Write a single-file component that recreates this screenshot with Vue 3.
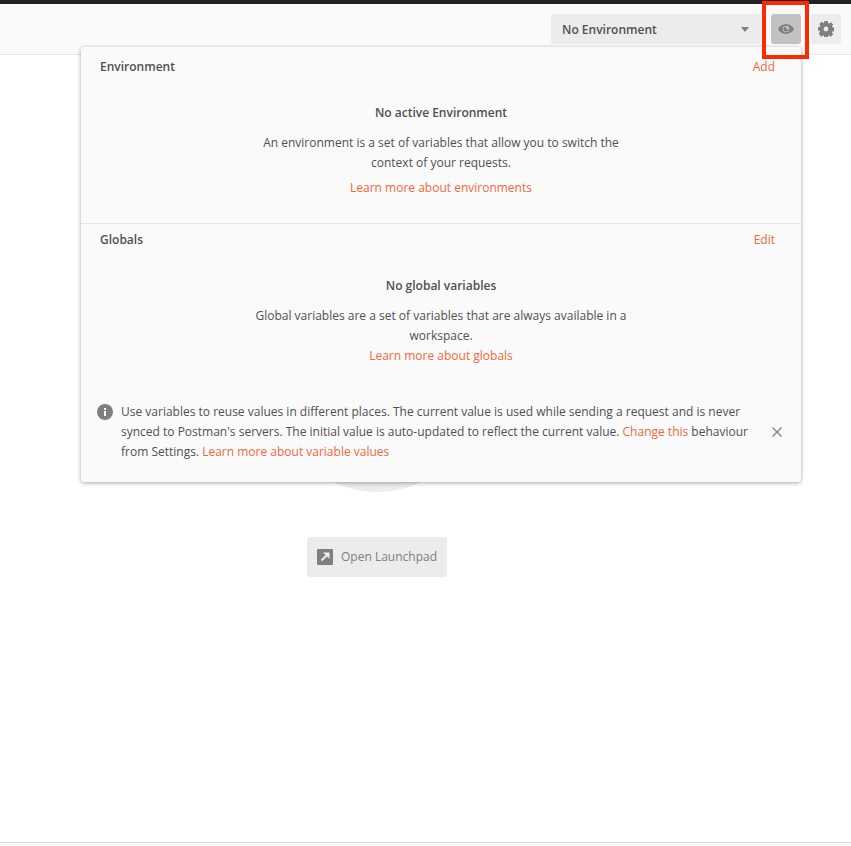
<template>
  <div class="app">
    <div class="topbar"></div>

    <header class="toolbar">
      <div class="env-select">
        <span class="env-name">No Environment</span>
        <span class="caret"></span>
      </div>
      <button class="tool-btn active" aria-label="Environment quick look">
        <svg width="16" height="10" viewBox="0 0 16 10">
          <path fill="#7f7f7f" fill-rule="evenodd" d="M8 0C4.400 0 1.400 2.200 0 5c1.400 2.800 4.400 5 8 5s6.600-2.200 8-5c-1.400-2.800-4.400-5-8-5zm0 1.700a3.300 3.300 0 1 1 0 6.600 3.300 3.300 0 0 1 0-6.600z" />
          <path fill="#7f7f7f" d="M8 2.500A2.500 2.500 0 1 0 10.500 5H8z" />
        </svg>
      </button>
      <button class="tool-btn" aria-label="Settings">
        <svg width="16" height="16" viewBox="0 0 18 18">
          <path fill="#7f7f7f" fill-rule="evenodd" d="M7 0h4l.4 2.300 1.100.5 2-1.400 2.600 2.600-1.400 2 .5 1.100 2.300.4v4l-2.300.4-.5 1.100 1.400 2-2.600 2.600-2-1.400-1.100.5-.4 2.300H7l-.4-2.300-1.100-.5-2 1.400L.9 14.100l1.400-2-.5-1.100L0 11V7l2.300-.4.500-1.100-1.400-2L4 .9l2 1.400 1.100-.5zM9 6.300a2.700 2.700 0 1 0 0 5.400 2.700 2.700 0 0 0 0-5.400z" />
        </svg>
      </button>
    </header>

    <main class="content">
      <div class="circle"></div>
      <button class="launchpad">
        <svg width="16" height="16" viewBox="0 0 16 16">
          <rect width="16" height="16" rx="1" fill="#7f7f7f" />
          <path fill="none" stroke="#ececec" stroke-width="2" d="M4.500 11.500l6-6" />
          <path fill="#ececec" d="M6 3.500h6.500V10z" />
        </svg>
        Open Launchpad
      </button>
    </main>

    <footer class="footer"></footer>

    <section class="popup">
      <div class="block env-block">
        <div class="block-head">
          <span class="block-title">Environment</span>
          <a class="link">Add</a>
        </div>
        <div class="empty">
          <h4>No active Environment</h4>
          <p>An environment is a set of variables that allow you to switch the<br />context of your requests.</p>
          <a class="link learn">Learn more about environments</a>
        </div>
      </div>

      <div class="block globals-block">
        <div class="block-head">
          <span class="block-title">Globals</span>
          <a class="link">Edit</a>
        </div>
        <div class="empty">
          <h4>No global variables</h4>
          <p>Global variables are a set of variables that are always available in a<br />workspace.</p>
          <a class="link">Learn more about globals</a>
        </div>
      </div>

      <div class="notice">
        <svg class="info" width="16" height="16" viewBox="0 0 16 16">
          <circle cx="8" cy="8" r="8" fill="#7f7f7f" />
          <rect x="7" y="7" width="2" height="5" fill="#fafafa" />
          <rect x="7" y="4" width="2" height="2" fill="#fafafa" />
        </svg>
        <p>
          Use variables to reuse values in different places. The current value is used while sending a request and is never
          synced to Postman's servers. The initial value is auto-updated to reflect the current value.
          <a class="link">Change this</a> behaviour from Settings.
          <a class="link">Learn more about variable values</a>
        </p>
        <svg class="close" width="10" height="10" viewBox="0 0 10 10">
          <path stroke="#7f7f7f" stroke-width="1.300" d="M.5.5l9 9M9.500.5l-9 9" />
        </svg>
      </div>
    </section>

    <div class="highlight"></div>
  </div>
</template>

<script setup>
</script>

<style scoped>
.app {
  position: relative;
  display: flex;
  flex-direction: column;
  height: 846px;
  overflow: hidden;
  background: #fff;
  color: #505050;
  font-family: "Open Sans", sans-serif;
  font-size: 12px;
  line-height: 20px;
}
.topbar {
  height: 4px;
  background: #222;
}
.toolbar {
  display: flex;
  justify-content: flex-end;
  align-items: center;
  gap: 10px;
  height: 50px;
  padding: 0 10px 0 0;
  background: #fafafa;
  border-bottom: 1px solid #e6e6e6;
  box-sizing: content-box;
}
.env-select {
  display: flex;
  align-items: center;
  justify-content: space-between;
  width: 210px;
  height: 30px;
  padding: 0 12px 0 11px;
  box-sizing: border-box;
  background: #ececec;
  border-radius: 3px;
  font-weight: 600;
}
.env-name {
  padding-top: 2px;
}
.caret {
  width: 0;
  height: 0;
  border-left: 4px solid transparent;
  border-right: 4px solid transparent;
  border-top: 5px solid #7f7f7f;
}
.tool-btn {
  display: flex;
  align-items: center;
  justify-content: center;
  width: 30px;
  height: 30px;
  padding: 0;
  border: 0;
  border-radius: 3px;
  background: #ececec;
}
.tool-btn.active {
  background: #c2c2c2;
}
.content {
  flex: 1;
  display: flex;
  flex-direction: column;
  align-items: center;
  padding-right: 97px;
}
.circle {
  width: 200px;
  height: 200px;
  margin-top: 237px;
  border-radius: 50%;
  background: #ececec;
}
.launchpad {
  display: flex;
  align-items: center;
  gap: 8px;
  width: 140px;
  height: 40px;
  margin-top: 45px;
  padding: 0 10px;
  border: 0;
  border-radius: 3px;
  background: #ececec;
  color: #808080;
  font: inherit;
}
.footer {
  height: 3px;
  background: #fafafa;
  border-top: 1px solid #dcdcdc;
}
.popup {
  position: absolute;
  top: 47px;
  left: 81px;
  width: 720px;
  height: 435px;
  box-sizing: border-box;
  background: #fafafa;
  border-radius: 3px;
  box-shadow: 0 1px 4px rgba(0, 0, 0, 0.35);
}
.block {
  box-sizing: border-box;
  padding: 10px 26px 0 19px;
}
.env-block {
  height: 177px;
  border-bottom: 1px solid #e6e6e6;
}
.globals-block {
  height: 163px;
  padding-top: 6px;
}
.block-head {
  display: flex;
  justify-content: space-between;
}
.block-title {
  font-weight: 600;
}
.empty {
  margin: 26px -7px 0 0;
  text-align: center;
}
.empty h4 {
  margin: 0 0 10px;
  font-size: 12px;
  font-weight: 600;
}
.empty p {
  margin: 0;
}
.learn {
  display: block;
  margin-top: 5px;
}
.link {
  color: #f8663a;
}
.notice {
  display: flex;
  align-items: flex-start;
  padding: 15px 19px 0 16px;
}
.notice p {
  flex: 1;
  margin: 0 20px 0 8px;
}
.info {
  flex: none;
  margin-top: 2px;
}
.close {
  flex: none;
  margin-top: 25px;
}
.highlight {
  position: absolute;
  top: 1px;
  left: 762px;
  width: 47px;
  height: 58px;
  box-sizing: border-box;
  border: 4px solid #fc2a00;
}
</style>
